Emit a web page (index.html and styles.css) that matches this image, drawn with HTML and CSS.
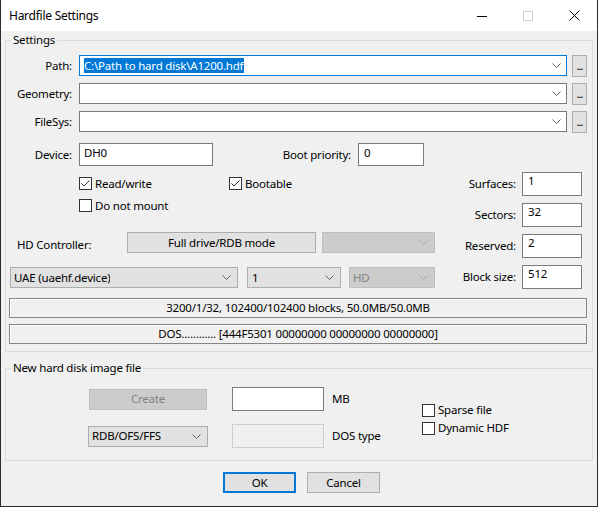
FILE: index.html
```html
<!DOCTYPE html>
<html>
<head>
<meta charset="utf-8">
<title>Hardfile Settings</title>
<link rel="stylesheet" href="styles.css">
</head>
<body>
<div class="window">
  <div class="titlebar">
    <span class="title">Hardfile Settings</span>
    <div class="caption-btns">
      <span class="cap"><svg width="10" height="10" viewBox="0 0 10 10"><line x1="0" y1="5.5" x2="10" y2="5.5" stroke="#000" stroke-width="1"/></svg></span>
      <span class="cap"><svg width="10" height="10" viewBox="0 0 10 10"><rect x="0.5" y="0.5" width="9" height="9" fill="none" stroke="#cccccc" stroke-width="1"/></svg></span>
      <span class="cap"><svg width="11" height="11" viewBox="0 0 11 11"><path d="M0.5 0.5L10.5 10.5M10.5 0.5L0.5 10.5" stroke="#000" stroke-width="1" fill="none"/></svg></span>
    </div>
  </div>

  <fieldset class="group settings">
    <legend>Settings</legend>

    <div class="file-row first">
      <span class="lbl">Path:</span>
      <div class="combo edit focus"><span class="ctext"><span class="sel">C:\Path to hard disk\A1200.hdf</span></span><svg class="chev" width="9" height="5" viewBox="0 0 9 5"><path d="M0.5 0.5L4.5 4.5L8.5 0.5"/></svg></div>
      <button class="dots">...</button>
    </div>
    <div class="file-row">
      <span class="lbl">Geometry:</span>
      <div class="combo edit"><span class="ctext"></span><svg class="chev" width="9" height="5" viewBox="0 0 9 5"><path d="M0.5 0.5L4.5 4.5L8.5 0.5"/></svg></div>
      <button class="dots">...</button>
    </div>
    <div class="file-row">
      <span class="lbl">FileSys:</span>
      <div class="combo edit"><span class="ctext"></span><svg class="chev" width="9" height="5" viewBox="0 0 9 5"><path d="M0.5 0.5L4.5 4.5L8.5 0.5"/></svg></div>
      <button class="dots">...</button>
    </div>

    <div class="device-row">
      <span class="lbl">Device:</span>
      <div class="input device">DH0</div>
      <span class="lbl boot-lbl">Boot priority:</span>
      <div class="input boot">0</div>
    </div>

    <div class="middle">
      <div class="left-col">
        <div class="cb-row cb-row1">
          <span class="check wide"><svg class="box" width="13" height="13" viewBox="0 0 13 13"><rect x="0.5" y="0.5" width="12" height="12" fill="#fff" stroke="#333"/><path d="M2.5 6.5L5 9L10.5 3.5" fill="none" stroke="#333" stroke-width="1"/></svg>Read/write</span>
          <span class="check"><svg class="box" width="13" height="13" viewBox="0 0 13 13"><rect x="0.5" y="0.5" width="12" height="12" fill="#fff" stroke="#333"/><path d="M2.5 6.5L5 9L10.5 3.5" fill="none" stroke="#333" stroke-width="1"/></svg>Bootable</span>
        </div>
        <div class="cb-row cb-row2">
          <span class="check"><svg class="box" width="13" height="13" viewBox="0 0 13 13"><rect x="0.5" y="0.5" width="12" height="12" fill="#fff" stroke="#333"/></svg>Do not mount</span>
        </div>
        <div class="hd-row">
          <span class="hd-lbl">HD Controller:</span>
          <button class="btn rdb">Full drive/RDB mode</button>
          <div class="combo disabled hdsub"><span class="ctext"></span><svg class="chev" width="9" height="5" viewBox="0 0 9 5"><path d="M0.5 0.5L4.5 4.5L8.5 0.5"/></svg></div>
        </div>
        <div class="uae-row">
          <div class="combo list uae"><span class="ctext">UAE (uaehf.device)</span><svg class="chev" width="9" height="5" viewBox="0 0 9 5"><path d="M0.5 0.5L4.5 4.5L8.5 0.5"/></svg></div>
          <div class="combo list unit"><span class="ctext">1</span><svg class="chev" width="9" height="5" viewBox="0 0 9 5"><path d="M0.5 0.5L4.5 4.5L8.5 0.5"/></svg></div>
          <div class="combo disabled hdtype"><span class="ctext">HD</span><svg class="chev" width="9" height="5" viewBox="0 0 9 5"><path d="M0.5 0.5L4.5 4.5L8.5 0.5"/></svg></div>
        </div>
      </div>
      <div class="right-col">
        <div class="geo-row"><span class="geo-lbl">Surfaces:</span><div class="input geo">1</div></div>
        <div class="geo-row"><span class="geo-lbl">Sectors:</span><div class="input geo">32</div></div>
        <div class="geo-row"><span class="geo-lbl">Reserved:</span><div class="input geo">2</div></div>
        <div class="geo-row"><span class="geo-lbl">Block size:</span><div class="input geo">512</div></div>
      </div>
    </div>

    <div class="info info1">3200/1/32, 102400/102400 blocks, 50.0MB/50.0MB</div>
    <div class="info info2">DOS............ [444F5301 00000000 00000000 00000000]</div>
  </fieldset>

  <fieldset class="group newdisk">
    <legend>New hard disk image file</legend>
    <div class="new-grid">
      <button class="btn create" disabled>Create</button>
      <div class="input size"></div>
      <span class="unit-lbl mb">MB</span>
      <div class="new-checks">
        <span class="check"><svg class="box" width="13" height="13" viewBox="0 0 13 13"><rect x="0.5" y="0.5" width="12" height="12" fill="#fff" stroke="#333"/></svg>Sparse file</span>
        <span class="check"><svg class="box" width="13" height="13" viewBox="0 0 13 13"><rect x="0.5" y="0.5" width="12" height="12" fill="#fff" stroke="#333"/></svg>Dynamic HDF</span>
      </div>
      <div class="combo list fstype"><span class="ctext">RDB/OFS/FFS</span><svg class="chev" width="9" height="5" viewBox="0 0 9 5"><path d="M0.5 0.5L4.5 4.5L8.5 0.5"/></svg></div>
      <div class="input dostype"></div>
      <span class="unit-lbl dos">DOS type</span>
    </div>
  </fieldset>

  <div class="dialog-btns">
    <button class="btn ok">OK</button>
    <button class="btn cancel">Cancel</button>
  </div>
</div>
</body>
</html>
```

FILE: styles.css
```css
* { box-sizing: border-box; }
html, body { margin: 0; padding: 0; }
body {
  width: 598px;
  height: 507px;
  overflow: hidden;
  font-family: "Noto Sans", "Segoe UI", sans-serif;
  font-size: 11.5px;
  letter-spacing: -0.2px;
  line-height: 16px;
  color: #000;
  background: #f0f0f0;
}
button { font-family: inherit; font-size: 11.5px; letter-spacing: -0.2px; color: #000; padding: 0; margin: 0; }

.window {
  width: 598px;
  height: 507px;
  border: 1px solid #2b2b2b;
  border-top: none;
  background: #f0f0f0;
  display: flex;
  flex-direction: column;
}

.titlebar {
  height: 31px;
  flex: none;
  background: #fff;
  display: flex;
  align-items: center;
  justify-content: space-between;
}
.title { padding-left: 8px; font-size: 12px; letter-spacing: -0.25px; }
.caption-btns { display: flex; height: 31px; }
.cap { width: 46px; height: 31px; display: flex; align-items: center; justify-content: center; }

.group {
  margin: 1px 4px 0 4px;
  padding: 0;
  border: 1px solid #dcdcdc;
  min-width: 0;
  flex: none;
}
.group legend {
  margin-left: 5px;
  padding: 0 2px;
  line-height: 16px;
  height: 16px;
}
.settings { padding-bottom: 7px; }

.lbl { width: 66px; text-align: right; flex: none; }

.file-row {
  display: flex;
  align-items: flex-start;
  height: 21px;
  margin-top: 7px;
}
.file-row .lbl { line-height: 21px; margin-right: 7px; }
.file-row .combo { width: 488px; }
.dots {
  width: 15px;
  height: 22px;
  margin-left: 5px;
  background: #e1e1e1;
  border: 1px solid #adadad;
  line-height: 18px;
  letter-spacing: -1px;
  text-align: center;
  flex: none;
}

.combo {
  display: flex;
  align-items: center;
  justify-content: space-between;
  height: 21px;
  border: 1px solid #7a7a7a;
  background: #fff;
  padding: 0 5px 0 4px;
  flex: none;
}
.combo .ctext { white-space: nowrap; overflow: hidden; }
.combo.focus { border-color: #0078d7; }
.chev { flex: none; }
.chev path { fill: none; stroke: #606060; stroke-width: 1; }
.sel { background: #0078d7; color: #fff; display: inline-block; line-height: 15px; padding-right: 1px; }

.combo.list { background: #e1e1e1; border-color: #adadad; padding: 0 6px 0 3px; }
.combo.disabled { background: #cccccc; border-color: #bfbfbf; color: #838383; padding: 0 6px 0 2px; }
.combo.disabled .chev path { stroke: #a8a8a8; }

.input {
  height: 23px;
  border: 1px solid #7a7a7a;
  background: #fff;
  padding: 1px 4px 0 4px;
  line-height: 16px;
  flex: none;
}

.device-row {
  display: flex;
  align-items: center;
  height: 23px;
  margin-top: 11px;
}
.device-row .lbl { margin-right: 7px; }
.input.device { width: 134px; }
.boot-lbl { width: 138px; margin-right: 7px; }
.input.boot { width: 66px; padding-left: 5px; }

.middle { display: flex; margin-top: 6px; }
.left-col { width: 430px; flex: none; }
.right-col { display: flex; flex-direction: column; gap: 7px; }

.cb-row { display: flex; align-items: center; height: 15px; padding-left: 73px; }
.cb-row1 { margin-top: 4px; }
.cb-row2 { margin-top: 7px; }
.check { display: flex; align-items: center; gap: 3px; white-space: nowrap; height: 16px; }
.check.wide { width: 150px; }
.box { flex: none; }

.hd-row { display: flex; align-items: center; height: 21px; margin-top: 19px; padding-left: 11px; }
.hd-lbl { width: 110px; flex: none; padding-top: 5px; }
.btn {
  height: 21px;
  background: #e1e1e1;
  border: 1px solid #adadad;
  text-align: center;
  line-height: 18px;
  flex: none;
}
.btn.rdb { width: 189px; }
.combo.hdsub { width: 113px; margin-left: 6px; }

.uae-row { display: flex; align-items: center; height: 21px; margin-top: 14px; padding-left: 4px; }
.combo.uae { width: 228px; }
.combo.unit { width: 94px; margin-left: 9px; padding-left: 4px; }
.combo.hdtype { width: 86px; margin-left: 8px; padding-left: 3px; }

.geo-row { display: flex; align-items: center; height: 24px; }
.geo-lbl { width: 80px; text-align: right; margin-right: 6px; }
.input.geo { width: 60px; height: 24px; padding: 0 4px 0 5px; }

.info {
  margin-left: 3px;
  width: 578px;
  height: 20px;
  border: 1px solid #858585;
  box-shadow: inset 1px 1px 0 #fff;
  text-align: center;
  line-height: 18px;
  white-space: nowrap;
}
.info1 { margin-top: 9px; }
.info2 { margin-top: 6px; }

.newdisk { margin-top: 8px; padding-bottom: 12px; }
.new-grid {
  display: grid;
  grid-template-columns: 144px 100px 90px auto;
  grid-template-rows: 24px 24px;
  row-gap: 13px;
  margin-top: 11px;
  margin-left: 82px;
}
.btn.create {
  grid-column: 1; grid-row: 1;
  align-self: center;
  width: 118px;
  margin-left: 1px;
  background: #cccccc;
  border-color: #bfbfbf;
  color: #838383;
}
.input.size { grid-column: 2; grid-row: 1; width: 92px; height: 24px; }
.unit-lbl { align-self: center; white-space: nowrap; }
.unit-lbl.mb { grid-column: 3; grid-row: 1; }
.unit-lbl.dos { grid-column: 3; grid-row: 2; }
.new-checks {
  grid-column: 4; grid-row: 1 / 3;
  align-self: start;
  margin-top: 15px;
  display: flex;
  flex-direction: column;
  gap: 2px;
}
.combo.fstype { grid-column: 1; grid-row: 2; align-self: center; width: 120px; padding-left: 3px; }
.input.dostype {
  grid-column: 2; grid-row: 2;
  width: 92px; height: 24px;
  background: #f0f0f0;
  border-color: #cccccc;
}

.dialog-btns { display: flex; gap: 11px; margin-top: 11px; padding-left: 222px; }
.btn.ok { width: 73px; border: 2px solid #0078d7; line-height: 17px; }
.btn.cancel { width: 73px; }
```
